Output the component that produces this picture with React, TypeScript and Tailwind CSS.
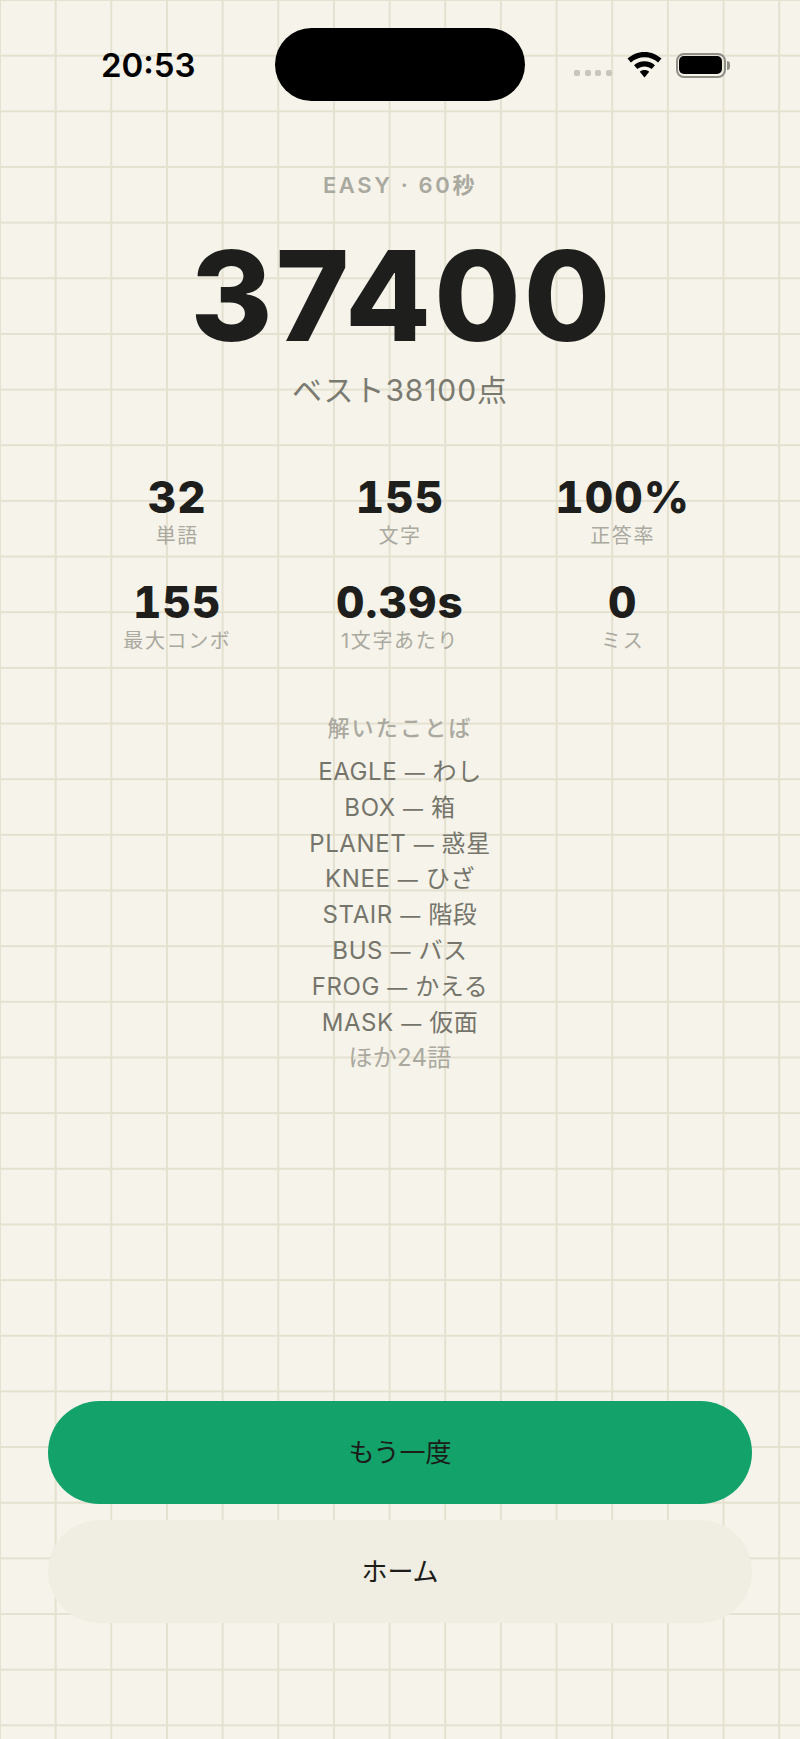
const stats = [
  { value: "32", label: "単語" },
  { value: "155", label: "文字" },
  { value: "100%", label: "正答率" },
  { value: "155", label: "最大コンボ" },
  { value: "0.39s", label: "1文字あたり" },
  { value: "0", label: "ミス" },
];

const words = [
  ["EAGLE", "わし"],
  ["BOX", "箱"],
  ["PLANET", "惑星"],
  ["KNEE", "ひざ"],
  ["STAIR", "階段"],
  ["BUS", "バス"],
  ["FROG", "かえる"],
  ["MASK", "仮面"],
];

function StatusBar() {
  return (
    <div className="flex h-[100px] items-start pl-[101px] pr-[70px] pt-[28px]">
      <div className="w-[174px] pt-[17px] text-[33px] leading-[40px] font-semibold text-black">20:53</div>
      <div className="h-[73px] w-[250px] rounded-[37px] bg-black" />
      <div className="ml-[49px] flex items-center pt-[24px]">
        <div className="mt-[16px] flex gap-[4.6px]">
          <div className="h-[6px] w-[6px] rounded-[2px] bg-[#c6c5be]" />
          <div className="h-[6px] w-[6px] rounded-[2px] bg-[#c6c5be]" />
          <div className="h-[6px] w-[6px] rounded-[2px] bg-[#c6c5be]" />
          <div className="h-[6px] w-[6px] rounded-[2px] bg-[#c6c5be]" />
        </div>
        <svg className="ml-[15px] h-[26px] w-[35px]" viewBox="0 0 35 26">
          <path d="M17.5 0C10.8 0 5 2.6 0.5 6.6L3.9 10.4C7.6 7.2 12.2 5.2 17.5 5.2S27.4 7.2 31.1 10.4L34.5 6.6C30 2.6 24.2 0 17.5 0Z" fill="#000" />
          <path d="M17.5 9.2C13.4 9.2 9.8 10.8 7 13.2L10.4 17C12.3 15.4 14.8 14.4 17.5 14.4S22.7 15.4 24.6 17L28 13.2C25.2 10.8 21.6 9.2 17.5 9.2Z" fill="#000" />
          <path d="M17.5 18C15.6 18 14 18.6 12.8 19.7L17.5 25.5L22.2 19.7C21 18.6 19.4 18 17.5 18Z" fill="#000" />
        </svg>
        <div className="ml-[14px] flex items-center">
          <div className="h-[25px] w-[50px] rounded-[8px] border-2 border-[#8f8e87] p-[1.5px]">
            <div className="h-full w-full rounded-[5px] bg-black" />
          </div>
          <div className="ml-[1px] h-[9px] w-[3px] rounded-r-full bg-[#8f8e87]" />
        </div>
      </div>
    </div>
  );
}

export default function App() {
  return (
    <div className="flex h-[1739px] w-[800px] flex-col overflow-hidden bg-[#f6f3ea] bg-[linear-gradient(#e4e1d1_2px,transparent_2px),linear-gradient(90deg,#e4e1d1_2px,transparent_2px)] bg-[size:55.67px_55.67px] bg-[position:-1px_-1px] font-['Inter','Noto_Sans_CJK_JP',sans-serif]">
      <StatusBar />
      <div className="mt-[71px] text-center text-[22px] leading-[28px] font-semibold tracking-[0.12em] text-[#a9a99f]">EASY · 60秒</div>
      <div className="mt-[17px] pl-[4px] text-center text-[125px] leading-[160px] font-extrabold tracking-[0.025em] text-[#1e1f1c]">37400</div>
      <div className="mt-[-6px] text-center text-[30px] leading-[40px] tracking-[0.03em] text-[#7a7a70]">ベスト38100点</div>
      <div className="mx-[66px] mt-[63px] grid grid-cols-3 gap-y-[29px]">
        {stats.map((s, i) => (
          <div key={i} className="flex flex-col items-center">
            <div className="text-[44px] leading-[48px] font-extrabold tracking-[0.025em] text-[#1e1f1c] tabular-nums">{s.value}</div>
            <div className="mt-[2px] text-[20px] leading-[26px] tracking-[0.08em] text-[#aaa9a0]">{s.label}</div>
          </div>
        ))}
      </div>
      <div className="mt-[60px] text-center text-[22px] leading-[28px] font-medium tracking-[0.1em] text-[#aaa9a0]">解いたことば</div>
      <div className="mt-[12px] flex flex-col items-center">
        {words.map(([en, ja]) => (
          <div key={en} className="text-[24px] leading-[35.8px] tracking-[0.025em] text-[#75756b]">
            {en} <span className="text-[20px] leading-none">—</span> {ja}
          </div>
        ))}
        <div className="text-[24px] leading-[35.8px] tracking-[0.01em] text-[#aaa9a0]">ほか24語</div>
      </div>
      <div className="mx-[48px] mt-auto mb-[116px] flex flex-col gap-[16px]">
        <button className="h-[103px] rounded-[52px] bg-[#12a26a] text-[26px] text-[#1c1c19]">もう一度</button>
        <button className="h-[103px] rounded-[52px] bg-[#f0ede2] text-[26px] text-[#1c1c19]">ホーム</button>
      </div>
    </div>
  );
}
